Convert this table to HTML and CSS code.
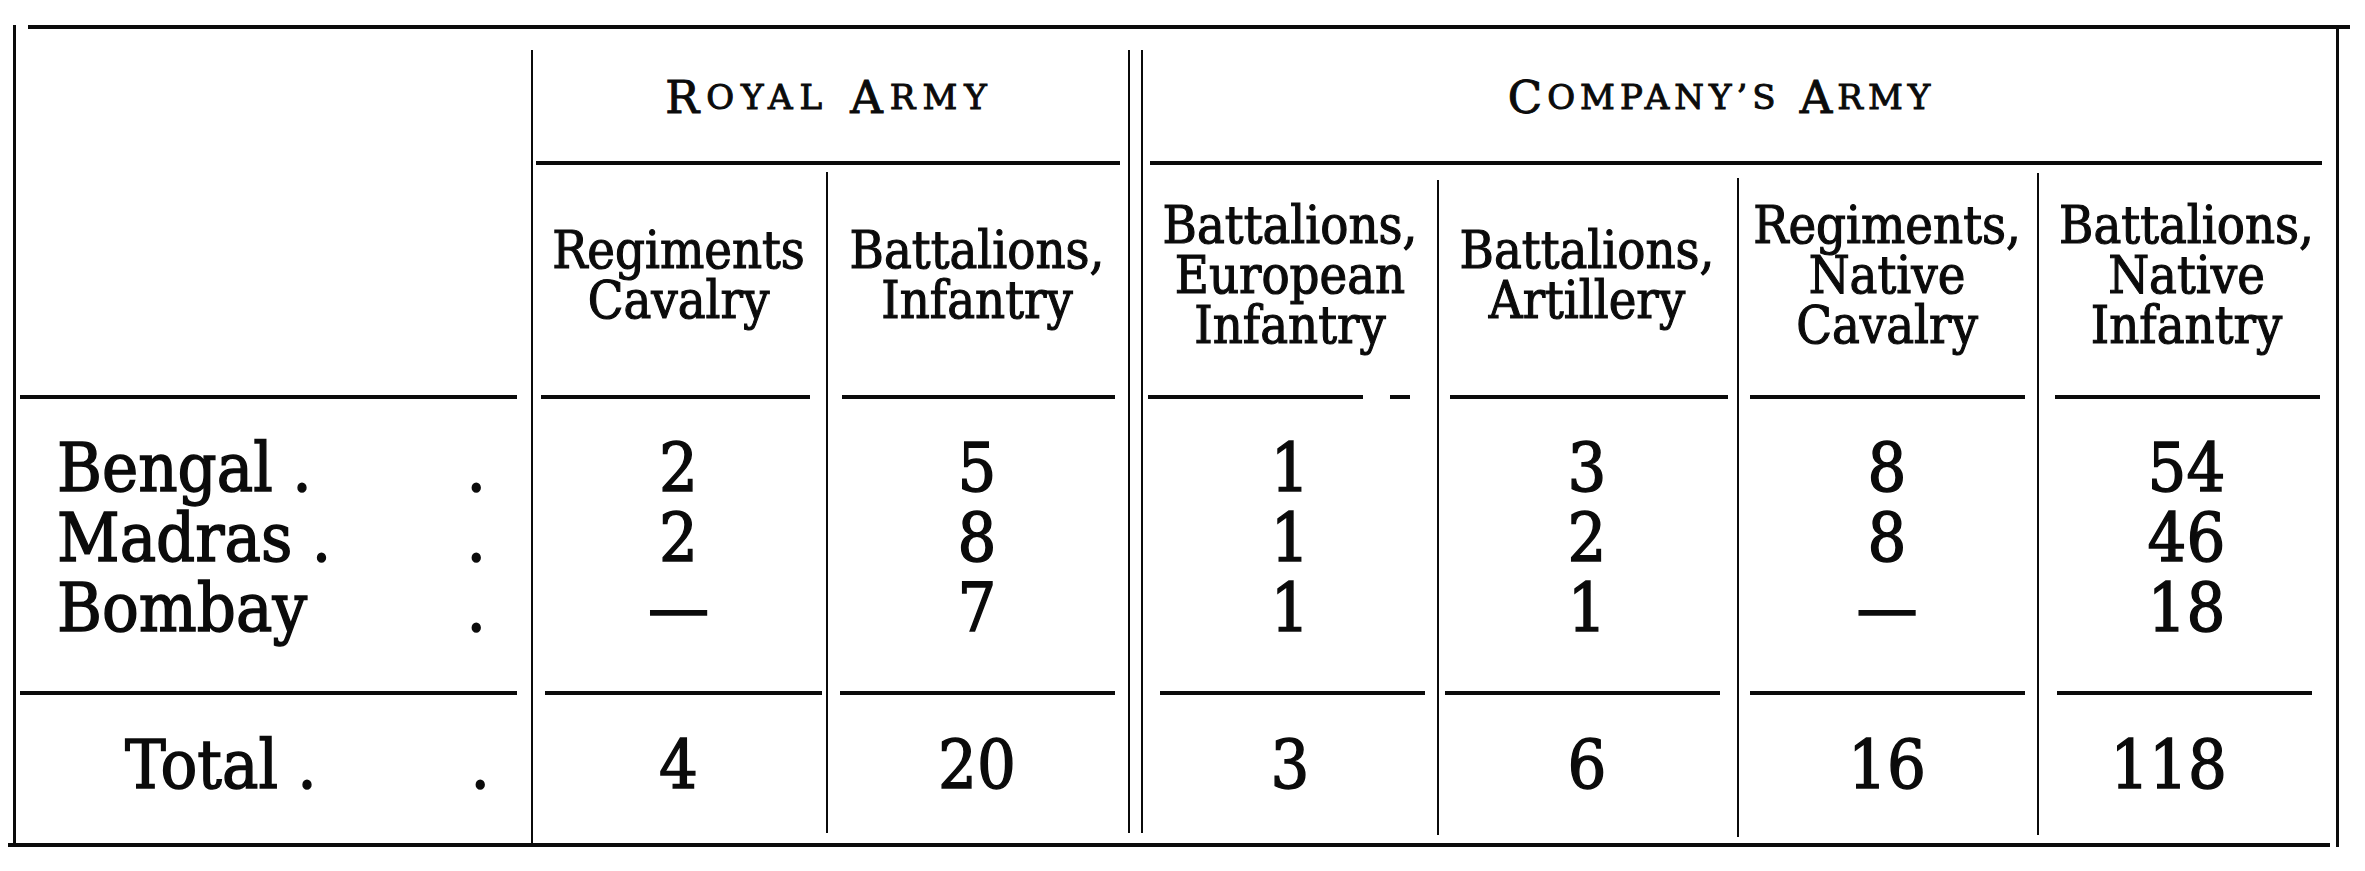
FILE: index.html
```html
<!DOCTYPE html>
<html lang="en">
<head>
<meta charset="utf-8">
<title>Royal Army and Company's Army</title>
<link rel="stylesheet" href="styles.css">
</head>
<body>
<div class="sheet">
  <div class="frame">
    <div class="rule-top"></div>
    <div class="grid">
      <!-- vertical rules -->
      <div class="vl vl-royal"></div>
      <div class="vl vl-royal-mid"></div>
      <div class="dbl"></div>
      <div class="vl vl-c2"></div>
      <div class="vl vl-c3"></div>
      <div class="vl vl-c4"></div>

      <!-- group headers -->
      <div class="group g-royal">R<span class="sc">OYAL</span>&nbsp;A<span class="sc">RMY</span></div>
      <div class="group g-company">C<span class="sc">OMPANY’S</span>&nbsp;A<span class="sc">RMY</span></div>
      <div class="hr hr-royal"></div>
      <div class="hr hr-company"></div>

      <!-- sub headers -->
      <div class="sub s1">Regiments<br>Cavalry</div>
      <div class="sub s2">Battalions,<br>Infantry</div>
      <div class="sub s3">Battalions,<br>European<br>Infantry</div>
      <div class="sub s4">Battalions,<br>Artillery</div>
      <div class="sub s5">Regiments,<br>Native<br>Cavalry</div>
      <div class="sub s6">Battalions,<br>Native<br>Infantry</div>

      <div class="hr r4 c1"></div>
      <div class="hr r4 c2"></div>
      <div class="hr r4 c3"></div>
      <div class="hr r4 c5 broken"></div>
      <div class="hr r4 c6"></div>
      <div class="hr r4 c7"></div>
      <div class="hr r4 c8"></div>

      <!-- data rows -->
      <div class="labels">
        <div class="lab"><span>Bengal .</span><span>.</span></div>
        <div class="lab"><span>Madras .</span><span>.</span></div>
        <div class="lab"><span>Bombay</span><span>.</span></div>
      </div>
      <div class="num n1"><div>2</div><div>2</div><div>—</div></div>
      <div class="num n2"><div>5</div><div>8</div><div>7</div></div>
      <div class="num n3"><div>1</div><div>1</div><div>1</div></div>
      <div class="num n4"><div>3</div><div>2</div><div>1</div></div>
      <div class="num n5"><div>8</div><div>8</div><div>—</div></div>
      <div class="num n6"><div>54</div><div>46</div><div>18</div></div>

      <div class="hr r6 c1"></div>
      <div class="hr r6 c2"></div>
      <div class="hr r6 c3"></div>
      <div class="hr r6 c5"></div>
      <div class="hr r6 c6"></div>
      <div class="hr r6 c7"></div>
      <div class="hr r6 c8"></div>

      <!-- totals -->
      <div class="total-label"><span>Total .</span><span>.</span></div>
      <div class="tot n1">4</div>
      <div class="tot n2">20</div>
      <div class="tot n3">3</div>
      <div class="tot n4">6</div>
      <div class="tot n5">16</div>
      <div class="tot n6 last">118</div>
    </div>
    <div class="rule-bottom"></div>
  </div>
</div>
</body>
</html>
```

FILE: styles.css
```css
html, body {
  margin: 0;
  padding: 0;
  background: #ffffff;
}

body {
  color: #0b0b0b;
  font-family: "DejaVu Serif Condensed", "DejaVu Serif", "Liberation Serif", serif;
  font-stretch: condensed;
  -webkit-text-stroke: 1.1px #0b0b0b;
}

.sheet {
  padding: 25px 0 0 13px;
}

.frame {
  width: 2326px;
  box-sizing: border-box;
  border-left: 3px solid #0b0b0b;
  border-right: 3px solid #0b0b0b;
}

.rule-top {
  height: 4px;
  background: #0b0b0b;
  margin: 0 -14px 0 12px;
}

.rule-bottom {
  height: 4px;
  background: #0b0b0b;
  margin: 0 6px 0 -8px;
}

.grid {
  display: grid;
  grid-template-columns: 515px 295px 302px 15px 294px 300px 300px 299px;
  grid-template-rows: 132px 4px 230px 4px 292px 4px 148px;
}

/* vertical rules */
.vl {
  width: 2px;
  background: #0b0b0b;
  justify-self: start;
}

.vl-royal {
  grid-column: 2;
  grid-row: 1 / 8;
  margin-top: 21px;
}

.vl-royal-mid {
  grid-column: 3;
  grid-row: 3 / 8;
  margin-top: 7px;
  margin-bottom: 10px;
}

.dbl {
  grid-column: 4;
  grid-row: 1 / 8;
  margin-top: 21px;
  margin-bottom: 10px;
  border-left: 2px solid #0b0b0b;
  border-right: 2px solid #0b0b0b;
}

.vl-c2 {
  grid-column: 6;
  grid-row: 3 / 8;
  margin-top: 15px;
  margin-bottom: 8px;
}

.vl-c3 {
  grid-column: 7;
  grid-row: 3 / 8;
  margin-top: 13px;
  margin-bottom: 6px;
}

.vl-c4 {
  grid-column: 8;
  grid-row: 3 / 8;
  margin-top: 8px;
  margin-bottom: 8px;
}

/* horizontal rules */
.hr {
  background: #0b0b0b;
}

.hr-royal {
  grid-column: 2 / 4;
  grid-row: 2;
  margin: 0 8px 0 5px;
}

.hr-company {
  grid-column: 5 / 9;
  grid-row: 2;
  margin: 0 14px 0 7px;
}

.r4 { grid-row: 4; }
.r6 { grid-row: 6; }

.r4.c1, .r6.c1 { grid-column: 1; margin: 0 14px 0 4px; }
.r4.c2 { grid-column: 2; margin: 0 16px 0 10px; }
.r4.c3 { grid-column: 3; margin: 0 13px 0 16px; }
.r4.c5 { grid-column: 5; margin: 0 12px 0 5px; }
.r4.c6 { grid-column: 6; margin: 0 9px 0 13px; }
.r4.c7 { grid-column: 7; margin: 0 12px 0 13px; }
.r4.c8 { grid-column: 8; margin: 0 16px 0 18px; }

.r4.broken {
  background: linear-gradient(to right, #0b0b0b 0 215px, transparent 215px 242px, #0b0b0b 242px 262px, transparent 262px);
}

.r6.c2 { grid-column: 2; margin: 0 4px 0 14px; }
.r6.c3 { grid-column: 3; margin: 0 13px 0 14px; }
.r6.c5 { grid-column: 5; margin: 0 12px 0 17px; }
.r6.c6 { grid-column: 6; margin: 0 17px 0 8px; }
.r6.c7 { grid-column: 7; margin: 0 12px 0 13px; }
.r6.c8 { grid-column: 8; margin: 0 24px 0 20px; }

/* group headings */
.group {
  grid-row: 1;
  display: flex;
  align-items: center;
  justify-content: center;
  padding-top: 4px;
  font-family: "DejaVu Serif", "Liberation Serif", serif;
  font-stretch: normal;
  font-size: 45px;
  letter-spacing: 7px;
  white-space: nowrap;
  -webkit-text-stroke: 1px #0b0b0b;
}

.group .sc {
  font-size: 34px;
}

.g-royal { grid-column: 2 / 4; }
.g-company { grid-column: 5 / 9; padding-right: 36px; letter-spacing: 5px; }

/* sub headings */
.sub {
  grid-row: 3;
  display: flex;
  align-items: center;
  justify-content: center;
  padding-bottom: 10px;
  text-align: center;
  font-size: 52px;
  line-height: 50px;
  white-space: nowrap;
}

.s1 { grid-column: 2; }
.s2 { grid-column: 3; }
.s3 { grid-column: 5; }
.s4 { grid-column: 6; }
.s5 { grid-column: 7; }
.s6 { grid-column: 8; }

/* body rows */
.labels {
  grid-column: 1;
  grid-row: 5;
  padding: 34px 45px 0 41px;
  font-size: 68px;
  line-height: 70px;
  -webkit-text-stroke: 1.4px #0b0b0b;
}

.lab {
  display: flex;
  justify-content: space-between;
}

.num {
  grid-row: 5;
  padding-top: 34px;
  text-align: center;
  font-size: 68px;
  line-height: 70px;
  -webkit-text-stroke: 1.4px #0b0b0b;
}

.n1 { grid-column: 2; }
.n2 { grid-column: 3; }
.n3 { grid-column: 5; }
.n4 { grid-column: 6; }
.n5 { grid-column: 7; }
.n6 { grid-column: 8; }

.total-label {
  grid-column: 1;
  grid-row: 7;
  display: flex;
  align-items: center;
  justify-content: space-between;
  padding: 0 41px 10px 109px;
  font-size: 68px;
  -webkit-text-stroke: 1.4px #0b0b0b;
}

.tot {
  grid-row: 7;
  display: flex;
  align-items: center;
  justify-content: center;
  padding-bottom: 10px;
  font-size: 68px;
  -webkit-text-stroke: 1.4px #0b0b0b;
}

.tot.last {
  padding-right: 36px;
}
```
